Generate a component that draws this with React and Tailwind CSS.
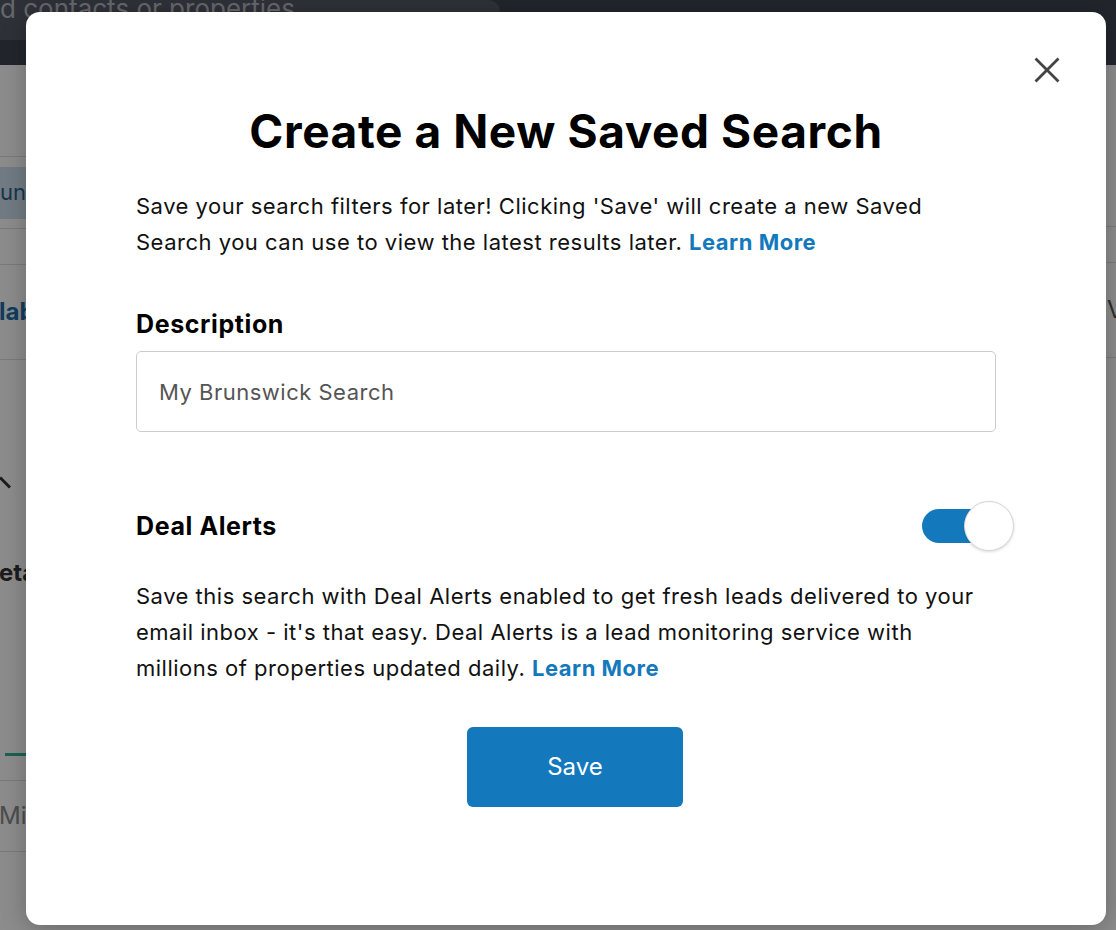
import React, { useState } from 'react';

const font = { fontFamily: 'Inter, Lato, sans-serif' };

const BackgroundPage = () => (
  <div className="min-h-[930px] w-full bg-white overflow-hidden">
    <div className="h-[65px] bg-[#3f4450] flex flex-col">
      <div className="h-[40px] w-[500px] bg-[#555a66] rounded-r-xl flex items-start">
        <span className="text-[26px] leading-[26px] -mt-[4px] text-[#b8bcc4] ml-0">
          d contacts or properties
        </span>
      </div>
    </div>
    <div className="flex justify-between">
      <div className="w-[200px] flex flex-col">
        <div className="h-[91px]" />
        <div className="border-t border-[#dedede] h-[72px] flex flex-col justify-center">
          <div className="h-[52px] bg-[#cfe0ef] flex items-center text-[22px] text-[#2b628f]">
            unswick
          </div>
        </div>
        <div className="border-t border-[#dedede] h-[36px]" />
        <div className="border-t border-[#dedede] h-[95px] flex items-center -ml-[1px] text-[24px] font-bold text-[#1d6fae]">
          lable
        </div>
        <div className="border-t border-[#dedede] h-[110px]" />
        <div className="h-[30px]">
          <div className="w-[14px] h-[3px] bg-[#333] rotate-45 ml-[-2px] mt-[12px]" />
        </div>
        <div className="h-[49px]" />
        <div className="h-[50px] flex items-center -ml-[1px] text-[24px] font-bold text-[#333]">
          etails
        </div>
        <div className="h-[155px]" />
        <div className="h-[3px] w-[60px] ml-[5px] bg-[#2fb596]" />
        <div className="h-[24px]" />
        <div className="border-t border-[#dedede] h-[71px] flex items-center -ml-[1px] text-[24px] text-[#8a8a8a]">
          Min
        </div>
        <div className="border-t border-[#dedede]" />
      </div>
      <div className="w-[200px] flex flex-col">
        <div className="h-[161px]" />
        <div className="border-t border-[#dedede] h-[36px] w-full" />
        <div className="border-t border-[#dedede] h-[95px] w-full flex items-center pl-[191px] text-[24px] text-[#555]">
          View
        </div>
        <div className="border-t border-[#dedede] w-full" />
      </div>
    </div>
  </div>
);

const Toggle = ({ on, onChange }) => (
  <button
    type="button"
    onClick={() => onChange(!on)}
    className={`relative w-[92px] h-[52px] flex items-center ${on ? 'justify-end' : 'justify-start'}`}
  >
    <span className={`absolute left-0 top-[9px] w-[70px] h-[34px] rounded-full ${on ? 'bg-[#1479bc]' : 'bg-[#cccccc]'}`} />
    <span className="relative w-[50px] h-[50px] rounded-full bg-white border border-[#d6d6d6] shadow-[0_1px_3px_rgba(0,0,0,0.15)]" />
  </button>
);

export default function App() {
  const [description, setDescription] = useState('My Brunswick Search');
  const [alerts, setAlerts] = useState(true);

  return (
    <div className="relative w-full min-h-[930px] overflow-hidden" style={font}>
      <BackgroundPage />
      <div className="absolute inset-0 bg-black/45" />
      <div className="absolute left-[26px] top-[12px] w-[1080px] h-[913px] bg-white rounded-[14px] shadow-[0_4px_24px_rgba(0,0,0,0.25)] px-[110px] pt-[96px] text-black">
        <button type="button" className="absolute right-[42px] top-[41px] w-[34px] h-[34px] flex items-center justify-center text-[#444]">
          <svg width="26" height="26" viewBox="0 0 26 26" fill="none" stroke="currentColor" strokeWidth="2.8" strokeLinecap="square">
            <path d="M2.5 2.5 L23.5 23.5 M23.5 2.5 L2.5 23.5" />
          </svg>
        </button>

        <h1 className="text-center text-[46px] leading-[46px] font-bold tracking-[0.6px]">
          Create a New Saved Search
        </h1>

        <p className="mt-[34px] text-[22px] leading-[36px] tracking-[0.5px] text-[#111]">
          Save your search filters for later! Clicking 'Save' will create a new Saved<br />
          Search you can use to view the latest results later.{' '}
          <a href="#" className="font-bold text-[#1479bc]">Learn More</a>
        </p>

        <label className="block mt-[49px] text-[25px] leading-[30px] font-bold tracking-[0.6px]">Description</label>
        <input
          value={description}
          onChange={(e) => setDescription(e.target.value)}
          className="mt-[12px] w-full h-[81px] border border-[#cccccc] rounded-[5px] px-[22px] text-[22px] tracking-[0.5px] text-[#555] outline-none"
          style={font}
        />

        <div className="mt-[68px] flex items-center justify-between">
          <span className="text-[25px] leading-[30px] font-bold tracking-[0.6px]">Deal Alerts</span>
          <div className="-mr-[18px]">
            <Toggle on={alerts} onChange={setAlerts} />
          </div>
        </div>

        <p className="mt-[26px] text-[22px] leading-[36px] tracking-[0.5px] text-[#111]">
          Save this search with Deal Alerts enabled to get fresh leads delivered to your<br />
          email inbox - it's that easy. Deal Alerts is a lead monitoring service with<br />
          millions of properties updated daily.{' '}
          <a href="#" className="font-bold text-[#1479bc]">Learn More</a>
        </p>

        <div className="mt-[41px] flex justify-center pl-[18px]">
          <button type="button" className="w-[216px] h-[80px] rounded-[6px] bg-[#1479bc] text-white text-[24px]">
            Save
          </button>
        </div>
      </div>
    </div>
  );
}
